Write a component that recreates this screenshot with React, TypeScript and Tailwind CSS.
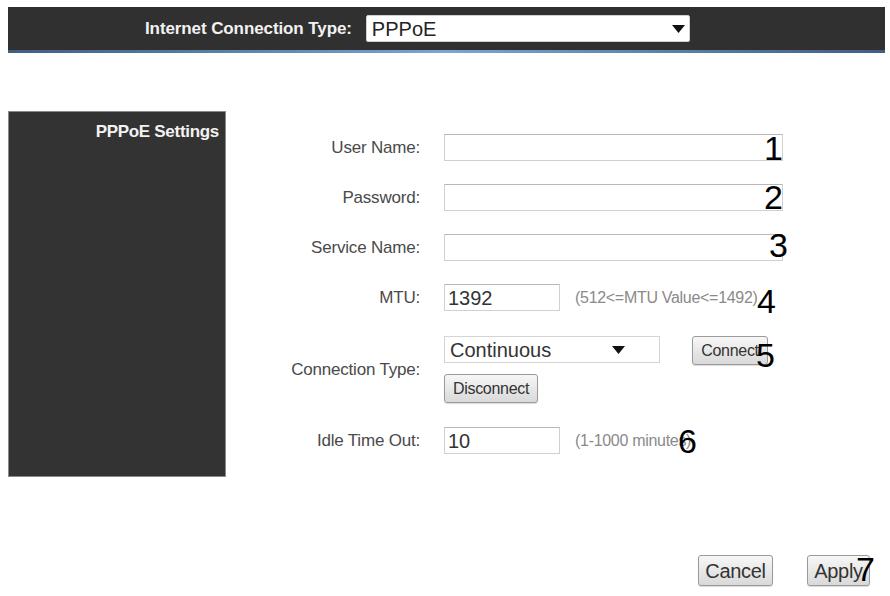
import React from 'react';

const font = { fontFamily: '"Liberation Sans", Arial, sans-serif' };

function Field({ label, children, className = '' }: { label: string; children: React.ReactNode; className?: string }) {
  return (
    <div className={`flex items-center ${className}`}>
      <div className="w-[194px] shrink-0 pr-[0px] text-right text-[17px] tracking-[-0.2px] text-[#4a4a4a]">{label}</div>
      <div className="ml-[24px] flex items-center">{children}</div>
    </div>
  );
}

function TextBox({ value = '', w }: { value?: string; w: string }) {
  return (
    <div className={`${w} flex h-[27px] items-center border border-[#d0d0d0] border-t-[#b8b8b8] bg-white pl-[3px] text-[20px] text-[#333]`}>
      {value}
    </div>
  );
}

function Btn({ children, className = '' }: { children: React.ReactNode; className?: string }) {
  return (
    <div
      className={`flex items-center justify-center rounded-[3px] border border-[#9a9a9a] bg-gradient-to-b from-[#f7f7f7] to-[#d9d9d9] text-[#333] shadow-[0_1px_1px_rgba(0,0,0,0.15)] ${className}`}
    >
      {children}
    </div>
  );
}

function Arrow() {
  return (
    <svg width="13" height="8" viewBox="0 0 13 8">
      <path d="M0 0h13L6.5 8z" fill="#111" />
    </svg>
  );
}

const marks = [
  { n: '1', x: 764, y: 128 },
  { n: '2', x: 764, y: 177 },
  { n: '3', x: 769, y: 225 },
  { n: '4', x: 757, y: 281 },
  { n: '5', x: 756, y: 335 },
  { n: '6', x: 678, y: 421 },
  { n: '7', x: 856, y: 549 },
];

export default function App() {
  return (
    <div className="relative h-[596px] w-[890px] overflow-hidden bg-white" style={font}>
      {/* top bar */}
      <div className="ml-[8px] mt-[7px] w-[877px]">
        <div className="flex h-[43px] items-center bg-[#303030] pl-[137px]">
          <span className="text-[17px] font-bold tracking-[-0.1px] text-[#f2f2f2]">Internet Connection Type:</span>
          <div className="ml-[14px] flex h-[27px] w-[324px] items-center justify-between rounded-[2px] border border-[#cfcfcf] bg-white pl-[5px] pr-[4px] text-[20px] text-[#222]">
            <span>PPPoE</span>
            <Arrow />
          </div>
        </div>
        <div className="h-[3px] bg-gradient-to-r from-[#3f5f82] via-[#7aa6cf] to-[#3f5f82]" />
      </div>

      {/* body */}
      <div className="mt-[58px] flex">
        <div className="ml-[8px] h-[366px] w-[218px] shrink-0 border border-[#8a8a8a] bg-[#333] pr-[6px] pt-[7px] text-right">
          <span className="text-[17px] font-bold tracking-[-0.3px] text-[#f2f2f2]">PPPoE Settings</span>
        </div>

        <div className="flex flex-col pt-[23px]">
          <Field label="User Name:">
            <TextBox w="w-[339px]" />
          </Field>
          <Field label="Password:" className="mt-[23px]">
            <TextBox w="w-[339px]" />
          </Field>
          <Field label="Service Name:" className="mt-[23px]">
            <TextBox w="w-[339px]" />
          </Field>
          <Field label="MTU:" className="mt-[23px]">
            <TextBox value="1392" w="w-[116px]" />
            <span className="ml-[15px] text-[16px] tracking-[-0.3px] text-[#8a8a8a]">(512&lt;=MTU Value&lt;=1492)</span>
          </Field>
          <Field label="Connection Type:" className="mt-[25px]">
            <div className="flex flex-col">
              <div className="flex items-start">
                <div className="flex h-[27px] w-[216px] items-center justify-between border border-[#d4d4d4] bg-white pl-[5px] pr-[34px] text-[20px] text-[#333]">
                  <span>Continuous</span>
                  <Arrow />
                </div>
                <Btn className="ml-[32px] h-[29px] w-[76px] text-[16px] tracking-[-0.3px]">Connect</Btn>
              </div>
              <Btn className="mt-[9px] h-[29px] w-[94px] text-[16px] tracking-[-0.3px]">Disconnect</Btn>
            </div>
          </Field>
          <Field label="Idle Time Out:" className="mt-[24px]">
            <TextBox value="10" w="w-[116px]" />
            <span className="ml-[15px] text-[16px] tracking-[-0.3px] text-[#8a8a8a]">(1-1000 minutes)</span>
          </Field>
        </div>
      </div>

      {/* footer buttons */}
      <div className="mt-[78px] flex justify-end pr-[20px]">
        <Btn className="h-[31px] w-[75px] text-[20px] tracking-[-0.3px]">Cancel</Btn>
        <Btn className="ml-[34px] h-[31px] w-[63px] text-[20px] tracking-[-0.3px]">Apply</Btn>
      </div>

      {/* annotation numbers */}
      {marks.map((m) => (
        <span
          key={m.n}
          className="absolute text-[34px] leading-[40px] text-black"
          style={{ left: m.x, top: m.y, fontFamily: '"Liberation Sans", Arial, sans-serif' }}
        >
          {m.n}
        </span>
      ))}
    </div>
  );
}
